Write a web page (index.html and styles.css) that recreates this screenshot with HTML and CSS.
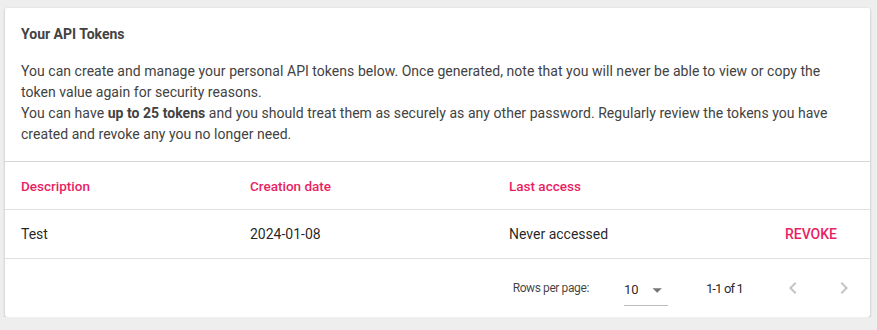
FILE: index.html
```html
<!DOCTYPE html>
<html lang="en">
<head>
    <meta charset="UTF-8">
    <title>API Tokens</title>
    <link rel="stylesheet" href="styles.css">
</head>
<body>
    <div class="card">
        <div class="card-header">
            <h2 class="card-title">Your API Tokens</h2>
            <p class="card-text">
                You can create and manage your personal API tokens below. Once generated, note that you will never be able to view or copy the token value again for security reasons.<br>
                You can have <strong>up to 25 tokens</strong> and you should treat them as securely as any other password. Regularly review the tokens you have created and revoke any you no longer need.
            </p>
        </div>

        <table class="token-table">
            <thead>
                <tr>
                    <th class="col-desc">Description</th>
                    <th class="col-date">Creation date</th>
                    <th class="col-access">Last access</th>
                    <th></th>
                </tr>
            </thead>
            <tbody>
                <tr>
                    <td>Test</td>
                    <td>2024-01-08</td>
                    <td>Never accessed</td>
                    <td class="cell-action"><button class="revoke-btn">Revoke</button></td>
                </tr>
            </tbody>
        </table>

        <div class="pagination">
            <span class="caption">Rows per page:</span>
            <div class="rows-select">
                <span>10</span>
                <svg class="select-arrow" viewBox="0 0 24 24" width="24" height="24"><path d="M7 10l5 5 5-5z"/></svg>
            </div>
            <span class="caption range">1-1 of 1</span>
            <div class="page-actions">
                <button class="icon-btn" disabled>
                    <svg viewBox="0 0 24 24" width="24" height="24"><path d="M15.41 7.41L14 6l-6 6 6 6 1.41-1.41L10.83 12z"/></svg>
                </button>
                <button class="icon-btn" disabled>
                    <svg viewBox="0 0 24 24" width="24" height="24"><path d="M10 6L8.59 7.41 13.17 12l-4.58 4.59L10 18l6-6z"/></svg>
                </button>
            </div>
        </div>
    </div>
</body>
</html>
```

FILE: styles.css
```css
body {
    margin: 0;
    padding: 8px 7px 0 5px;
    background-color: #eeeeee;
    font-family: Roboto, "Liberation Sans", sans-serif;
}
.card {
    background-color: #fff;
    border-radius: 2px;
    box-shadow: 0 1px 3px rgba(0,0,0,0.2), 0 1px 1px rgba(0,0,0,0.14), 0 2px 1px -1px rgba(0,0,0,0.12);
}
.card-header {
    padding: 16px 16px 16px 16px;
    border-bottom: 1px solid #d6d6d6;
}
.card-title {
    margin: 0;
    font-size: 14px;
    line-height: 21px;
    font-weight: 700;
    color: #424242;
}
.card-text {
    max-width: 816px;
    margin: 16px 0 0;
    font-size: 14px;
    line-height: 21px;
    letter-spacing: 0.04px;
    color: #424242;
}
.card-text strong {
    font-weight: 700;
}
.token-table {
    width: 100%;
    border-collapse: collapse;
    table-layout: fixed;
}
.token-table th,
.token-table td {
    text-align: left;
    padding: 0 16px;
    border-bottom: 1px solid #e0e0e0;
}
.token-table th {
    height: 47px;
    font-size: 13.5px;
    font-weight: 500;
    color: #e91e63;
}
.token-table td {
    height: 48px;
    font-size: 14px;
    color: rgba(0,0,0,0.87);
}
.col-desc {
    width: 197px;
}
.col-date {
    width: 227px;
}
.col-access {
    width: 227px;
}
.token-table td.cell-action {
    text-align: right;
    padding-right: 33px;
}
.revoke-btn {
    background: none;
    border: none;
    padding: 0;
    font-family: inherit;
    font-size: 14px;
    font-weight: 500;
    text-transform: uppercase;
    color: #e91e63;
    cursor: pointer;
}
.pagination {
    display: flex;
    align-items: center;
    justify-content: flex-end;
    height: 58px;
    padding-right: 2px;
    font-size: 12px;
    color: rgba(0,0,0,0.87);
}
.caption {
    color: rgba(0,0,0,0.75);
    letter-spacing: -0.4px;
}
.rows-select {
    display: flex;
    align-items: center;
    width: 44px;
    height: 32px;
    margin-left: 35px;
    margin-right: 38px;
    border-bottom: 1px solid #bdbdbd;
    box-sizing: border-box;
    font-size: 13px;
    position: relative;
    top: 2px;
}
.select-arrow {
    fill: #757575;
    margin-left: 7px;
}
.range {
    font-size: 13px;
    letter-spacing: -0.85px;
    color: rgba(0,0,0,0.87);
}
.page-actions {
    display: flex;
    gap: 3px;
    margin-left: 26px;
}
.icon-btn {
    width: 48px;
    height: 48px;
    padding: 12px;
    border: none;
    background: none;
    border-radius: 50%;
}
.icon-btn svg {
    fill: #c4c4c4;
}
```
